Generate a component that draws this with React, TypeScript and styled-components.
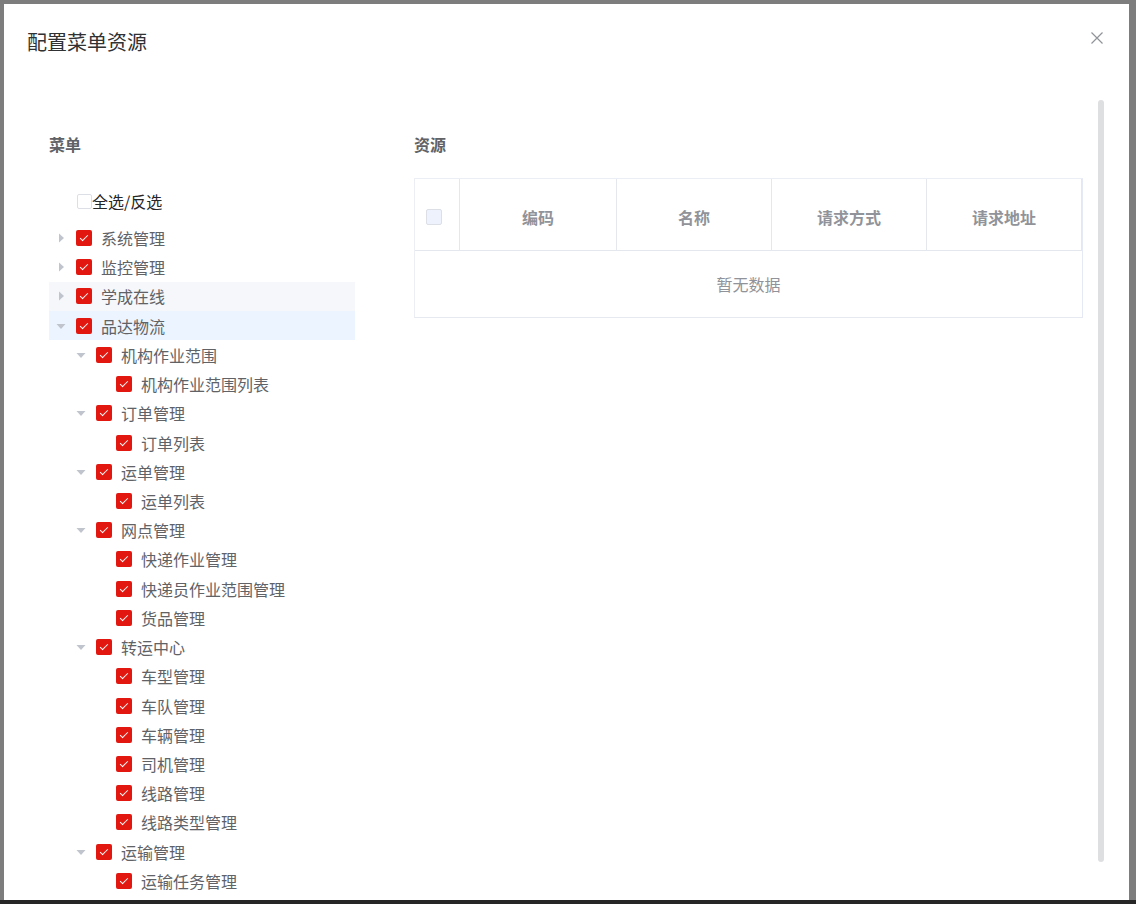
import styled, { createGlobalStyle } from "styled-components";

type TreeNode = {
  label: string;
  children?: TreeNode[];
  expanded?: boolean;
  state?: "hover" | "current";
};

const treeData: TreeNode[] = [
  { label: "系统管理", children: [{ label: "-" }] },
  { label: "监控管理", children: [{ label: "-" }] },
  { label: "学成在线", children: [{ label: "-" }], state: "hover" },
  {
    label: "品达物流",
    expanded: true,
    state: "current",
    children: [
      { label: "机构作业范围", expanded: true, children: [{ label: "机构作业范围列表" }] },
      { label: "订单管理", expanded: true, children: [{ label: "订单列表" }] },
      { label: "运单管理", expanded: true, children: [{ label: "运单列表" }] },
      {
        label: "网点管理",
        expanded: true,
        children: [
          { label: "快递作业管理" },
          { label: "快递员作业范围管理" },
          { label: "货品管理" },
        ],
      },
      {
        label: "转运中心",
        expanded: true,
        children: [
          { label: "车型管理" },
          { label: "车队管理" },
          { label: "车辆管理" },
          { label: "司机管理" },
          { label: "线路管理" },
          { label: "线路类型管理" },
        ],
      },
      { label: "运输管理", expanded: true, children: [{ label: "运输任务管理" }] },
    ],
  },
];

const columns = ["编码", "名称", "请求方式", "请求地址"];

const GlobalStyle = createGlobalStyle`
  html, body {
    margin: 0;
    padding: 0;
    background: #7d7d7d;
    font-family: "Noto Sans CJK SC", "Noto Sans", "Liberation Sans", sans-serif;
  }
  * { box-sizing: border-box; }
`;

const Page = styled.div`
  width: 1136px;
  height: 904px;
  display: flex;
  flex-direction: column;
  overflow: hidden;
`;

const Modal = styled.div`
  position: relative;
  margin: 4px 7px 0 4px;
  height: 896px;
  background: #fff;
  display: flex;
  flex-direction: column;
`;

const Footer = styled.div`
  height: 4px;
  background: #262626;
`;

const Header = styled.div`
  height: 86px;
  padding: 24px 23px 0;
  flex-shrink: 0;
`;

const Title = styled.div`
  font-size: 20px;
  line-height: 28px;
  color: #303133;
`;

const Close = styled.button`
  position: absolute;
  top: 28px;
  right: 26px;
  width: 12px;
  height: 12px;
  padding: 0;
  border: 0;
  background: none;
  cursor: pointer;
  display: flex;
`;

const Body = styled.div`
  position: relative;
  flex: 1;
  overflow: hidden;
`;

const Scroller = styled.div`
  height: 100%;
  overflow-y: auto;
  scrollbar-width: none;
  &::-webkit-scrollbar { display: none; }
`;

const Thumb = styled.div`
  position: absolute;
  top: 10px;
  bottom: 38px;
  right: 25px;
  width: 6px;
  border-radius: 3px;
  background: #dedfe1;
`;

const Columns = styled.div`
  display: flex;
  gap: 59px;
  padding: 43px 0 0 45px;
`;

const Column = styled.div<{ $width: number }>`
  width: ${(p) => p.$width}px;
  flex-shrink: 0;
`;

const Heading = styled.div`
  font-size: 16px;
  line-height: 22px;
  font-weight: 700;
  color: #606266;
`;

const AllSelect = styled.label`
  display: flex;
  align-items: center;
  height: 26px;
  margin-top: 33px;
  padding-left: 28px;
  font-size: 16px;
  color: #262626;
`;

const EmptyBox = styled.span`
  width: 15px;
  height: 15px;
  border: 1px solid #dcdfe6;
  border-radius: 2px;
  background: #fff;
`;

const Tree = styled.div`
  margin-top: 9.4px;
`;

const Row = styled.div<{ $level: number; $state?: "hover" | "current" }>`
  display: flex;
  align-items: center;
  height: 29.23px;
  padding-left: ${(p) => (p.$level - 1) * 20}px;
  background: ${(p) =>
    p.$state === "hover" ? "#f5f7fa" : p.$state === "current" ? "#ecf5ff" : "transparent"};
`;

const Caret = styled.span<{ $open: boolean; $leaf: boolean }>`
  width: 24px;
  height: 24px;
  display: flex;
  align-items: center;
  justify-content: center;
  visibility: ${(p) => (p.$leaf ? "hidden" : "visible")};
  svg {
    transform: rotate(${(p) => (p.$open ? 90 : 0)}deg);
  }
`;

const Check = styled.span`
  position: relative;
  width: 16px;
  height: 16px;
  margin-left: 3px;
  border-radius: 2px;
  background: #e2170f;
  flex-shrink: 0;
  &::after {
    content: "";
    position: absolute;
    left: 5.5px;
    top: 3px;
    width: 3px;
    height: 7px;
    border: 1px solid #fff;
    border-left: 0;
    border-top: 0;
    transform: rotate(45deg);
  }
`;

const Label = styled.span`
  margin-left: 9px;
  font-size: 16px;
  color: #606266;
  white-space: nowrap;
`;

const Table = styled.div`
  margin-top: 23px;
  border: 1px solid #ebeef5;
  border-bottom-color: #e6e9f0;
  border-right-color: #e4e9f5;
`;

const HeadRow = styled.div`
  display: grid;
  grid-template-columns: 45px 157px 155px 155px 1fr;
  height: 72px;
  border-bottom: 1px solid #e4e7ed;
`;

const HeadCell = styled.div<{ $start?: boolean }>`
  display: flex;
  align-items: center;
  justify-content: ${(p) => (p.$start ? "flex-start" : "center")};
  padding: 5px 0 0 ${(p) => (p.$start ? 11 : 0)}px;
  border-right: 1px solid #e4e7ed;
  font-size: 16px;
  font-weight: 700;
  color: #909399;
`;

const DisabledBox = styled.span`
  width: 16px;
  height: 16px;
  border: 1px solid #dcdfe6;
  border-radius: 2px;
  background: #edf2fc;
`;

const Empty = styled.div`
  height: 66px;
  display: flex;
  align-items: center;
  justify-content: center;
  font-size: 16px;
  color: #909399;
`;

function CaretIcon() {
  return (
    <svg width="12" height="12" viewBox="0 0 12 12">
      <path d="M4 1.5 L9 6 L4 10.5 Z" fill="#c0c4cc" />
    </svg>
  );
}

function renderNodes(nodes: TreeNode[], level: number): React.ReactNode[] {
  const out: React.ReactNode[] = [];
  nodes.forEach((n, i) => {
    const leaf = !n.children;
    out.push(
      <Row key={`${level}-${i}-${n.label}`} $level={level} $state={n.state}>
        <Caret $open={!!n.expanded} $leaf={leaf}>
          <CaretIcon />
        </Caret>
        <Check />
        <Label>{n.label}</Label>
      </Row>
    );
    if (n.children && n.expanded) out.push(...renderNodes(n.children, level + 1));
  });
  return out;
}

export default function App() {
  return (
    <Page>
      <GlobalStyle />
      <Modal>
        <Header>
          <Title>配置菜单资源</Title>
        </Header>
        <Close aria-label="close">
          <svg width="12" height="12" viewBox="0 0 12 12">
            <path d="M0.5 0.5 L11.5 11.5 M11.5 0.5 L0.5 11.5" stroke="#909399" strokeWidth="1.2" />
          </svg>
        </Close>
        <Body>
          <Scroller>
            <Columns>
              <Column $width={306}>
                <Heading>菜单</Heading>
                <AllSelect>
                  <EmptyBox />
                  全选/反选
                </AllSelect>
                <Tree>{renderNodes(treeData, 1)}</Tree>
              </Column>
              <Column $width={669}>
                <Heading>资源</Heading>
                <Table>
                  <HeadRow>
                    <HeadCell $start>
                      <DisabledBox />
                    </HeadCell>
                    {columns.map((c) => (
                      <HeadCell key={c}>{c}</HeadCell>
                    ))}
                  </HeadRow>
                  <Empty>暂无数据</Empty>
                </Table>
              </Column>
            </Columns>
          </Scroller>
          <Thumb />
        </Body>
      </Modal>
      <Footer />
    </Page>
  );
}
